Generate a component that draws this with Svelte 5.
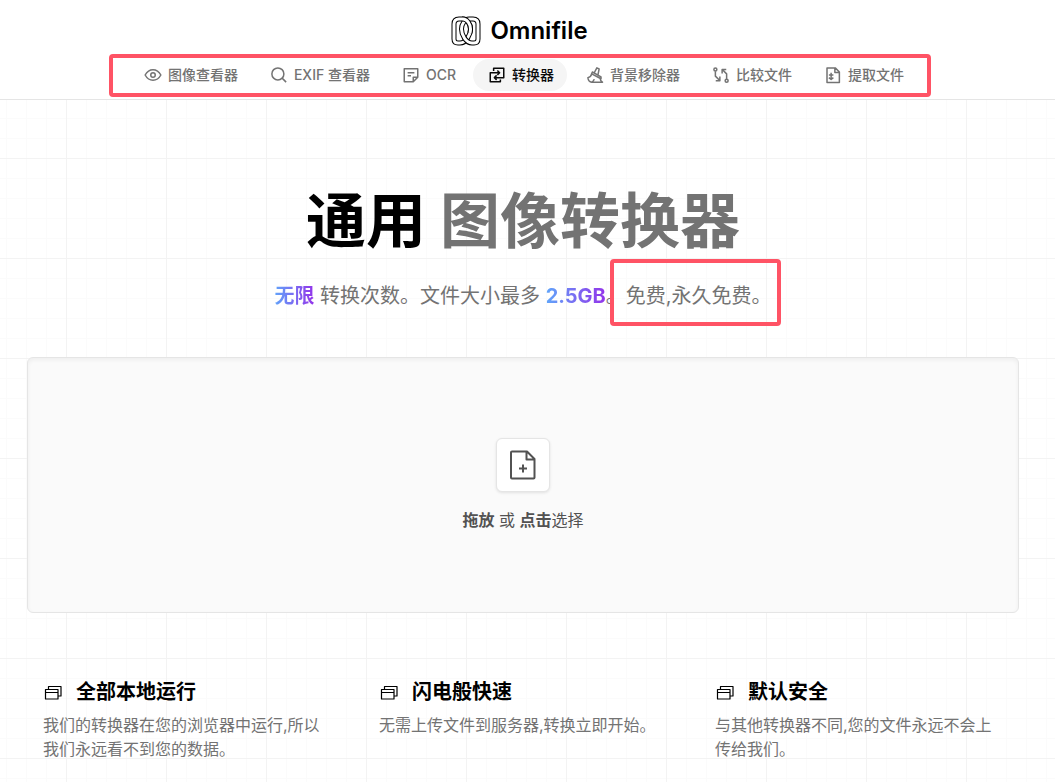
<script lang="ts">
	const nav = [
		{ slug: 'viewer', label: '图像查看器', icon: 'M1.500 12C4 7.500 7.500 5 12 5s8 2.500 10.500 7C20 16.500 16.500 19 12 19s-8-2.500-10.500-7Z M15 12a3 3 0 1 1-6 0a3 3 0 1 1 6 0Z' },
		{ slug: 'exif', label: 'EXIF 查看器', icon: 'M18.500 10.500a8 8 0 1 1-16 0a8 8 0 1 1 16 0Z M16.500 16.500l5 5' },
		{ slug: 'ocr', label: 'OCR', icon: 'M3 3.500h18V15l-6 6H3Z M21 15h-6v6 M7.500 9h9 M7.500 13h4.500' },
		{ slug: 'converter', label: '转换器', icon: 'M7.500 6.500V3H21V15.500H8.500 M11.500 12.500L8.500 15.500l3 3 M16.500 18v3H3V9H15.500 M12.500 6L15.500 9l-3 3' },
		{ slug: 'background', label: '背景移除器', icon: 'M11 9L14.500 2.500l3 1.500l-1.500 7.500 M8.500 8l11.500 6.500v2.500L7.500 10.500Z M7.500 10.500C7 13 5 15 2.500 15.500C3 19 5 21.500 7.500 21.500h14.500C20 20.500 19 19 19 17 M7.500 21.500c2-1 3-2 3.500-4' },
		{ slug: 'compare', label: '比较文件', icon: 'M6.500 4.500a2 2 0 1 1-4 0a2 2 0 1 1 4 0Z M4.500 7v6.500l5.500 5.500 M10.500 14v5.500H5 M21.500 19.500a2 2 0 1 1-4 0a2 2 0 1 1 4 0Z M19.500 17v-6.500L14 5 M13.500 10V4.500H19' },
		{ slug: 'extract', label: '提取文件', icon: 'M4 2.500h11l5.500 5.500v14H4Z M14.500 2.500V8.500h6 M9.500 9v9.500 M6.500 12h6 M6.500 15.500L9.500 18l3-2.500' },
	];

	const features = [
		{ title: '全部本地运行', text: '我们的转换器在您的浏览器中运行,所以我们永远看不到您的数据。' },
		{ title: '闪电般快速', text: '无需上传文件到服务器,转换立即开始。' },
		{ title: '默认安全', text: '与其他转换器不同,您的文件永远不会上传给我们。' },
	];

	// the two links of the logo chain; the last piece weaves the left one back on top
	const links = [
		'M8 3H12C16 3 19.500 8 19.500 13C19.500 19 15 27 9 27H7Q3 27 3 23V8Q3 3 8 3Z',
		'M22 3H18C14 3 10.500 8 10.500 13C10.500 19 15 27 21 27H23Q27 27 27 23V8Q27 3 22 3Z',
		'M11 3H12C16 3 19.500 8 19.500 13Q19.500 15 19 17',
	];

	let active = $state('converter');
	let picker: HTMLInputElement;
</script>

<svelte:head>
	<title>Omnifile</title>
</svelte:head>

<div class="page">
	<header>
		<a class="brand" href="/">
			<svg width="30" height="30" viewBox="0 0 30 30" fill="none" aria-hidden="true">
				{#each links as d}
					<path class="rim" {d} />
					<path class="core" {d} />
				{/each}
			</svg>
			<span>Omnifile</span>
		</a>
		<nav>
			{#each nav as item}
				<a href="#{item.slug}" class:active={active === item.slug} onclick={() => active = item.slug}>
					<svg width="18" height="18" viewBox="0 0 24 24" aria-hidden="true"><path d={item.icon} /></svg>
					<span>{item.label}</span>
				</a>
			{/each}
		</nav>
		<div class="mark mark-nav"></div>
	</header>

	<main>
		<h1>通用 <span>图像转换器</span></h1>
		<p class="subtitle">
			<b>无限</b> 转换次数。文件大小最多 <b>2.5GB</b>。<span class="free">免费,永久免费。<span class="mark mark-free"></span></span>
		</p>

		<button class="dropzone" onclick={() => picker.click()}>
			<span class="tile">
				<svg width="32" height="32" viewBox="0 0 32 32" aria-hidden="true">
					<path d="M5 2.500h15l7.500 7.500v18.500q0 1-1 1H5q-1 0-1-1v-25q0-1 1-1Z M19.500 2.500V10.500H27.500 M16 15.500v8 M12 19.500h8" />
				</svg>
			</span>
			<span class="hint"><b>拖放</b> 或 <b>点击</b>选择</span>
		</button>
		<input bind:this={picker} type="file" accept="image/*" aria-label="选择" hidden />

		<section class="features">
			{#each features as feature}
				<article>
					<h2>
						<svg width="20" height="20" viewBox="0 0 20 20" aria-hidden="true">
							<path d="M2.500 7.500h12.500v9.500h-12.500Z M2.500 10.500h12.500 M5.500 7.500V4.500h12.500v9.500h-3" />
						</svg>
						{feature.title}
					</h2>
					<p>{feature.text}</p>
				</article>
			{/each}
		</section>
	</main>
</div>

<style>
	:global(body) { margin: 0; background: #fff; }

	.page {
		--gutter: 9px;
		min-height: 100vh;
		font-family: Inter, "Noto Sans CJK SC", sans-serif;
		color: #000;
		background-color: #fff;
		background-image:
			linear-gradient(to right, #f3f3f3 1px, transparent 1px),
			linear-gradient(to bottom, #f3f3f3 1px, transparent 1px),
			linear-gradient(to right, #fbfbfb 1px, transparent 1px),
			linear-gradient(to bottom, #fbfbfb 1px, transparent 1px);
		background-size: 100px 100px, 100px 100px, 20px 20px, 20px 20px;
		background-position: 66px 58px;
	}

	header {
		position: relative;
		display: flex; flex-direction: column; align-items: center; gap: 10px;
		padding: 13px var(--gutter) 8px 0;
		background: #fff;
		border-bottom: 1px solid #e5e5e5;
	}
	.brand {
		display: flex; align-items: center; gap: 9px;
		height: 36px; padding-right: 7px;
		font-size: 24px; font-weight: 600; line-height: 36px;
		color: #000; text-decoration: none;
	}
	.rim { stroke: #000; stroke-width: 5; }
	.core { stroke: #fff; stroke-width: 3; }

	nav { display: flex; gap: 4px; }
	nav a {
		display: flex; align-items: center; gap: 6px;
		height: 32px; padding: 0 13px 0 15px; border-radius: 16px;
		font-size: 14px; font-weight: 500; line-height: 20px; white-space: nowrap;
		color: #737373; text-decoration: none;
	}
	nav a.active { background: #f5f5f5; color: #0a0a0a; }
	nav svg, .tile svg, h2 svg { flex: none; fill: none; stroke: currentColor; stroke-linejoin: round; }
	nav svg { stroke-width: 2; }

	.mark { position: absolute; box-sizing: border-box; border: 4px solid #ff5365; border-radius: 4px; pointer-events: none; }
	.mark-nav { left: 109px; right: 124px; top: 54px; bottom: 2px; }
	.mark-free { inset: -23px -9px -16px -16px; }

	main { padding: 89px calc(27px + var(--gutter)) 20px 27px; }
	h1 { margin: 0; font-size: 60px; font-weight: 700; line-height: 64px; text-align: center; }
	h1 span { color: #737373; }
	.subtitle {
		margin: 29px 0 47px;
		font-size: 20px; font-weight: 400; line-height: 28px; text-align: center;
		color: #737373;
	}
	.subtitle b {
		font-weight: 700; color: transparent;
		background: linear-gradient(to right, #60a5fa, #9333ea);
		background-clip: text;
	}
	.free { position: relative; display: inline-block; }

	.dropzone {
		box-sizing: border-box;
		display: flex; flex-direction: column; align-items: center; justify-content: center; gap: 16px;
		width: 100%; height: 256px; padding: 0;
		background: #fafafa; border: 1px solid #e5e5e5; border-radius: 6px;
		box-shadow: inset 0 2px 4px rgba(0,0,0,.05);
		font: inherit; color: #525252; cursor: pointer;
	}
	.tile {
		box-sizing: border-box;
		display: grid; place-items: center;
		width: 54px; height: 54px;
		background: #fff; border: 1px solid #e5e5e5; border-radius: 6px;
		box-shadow: 0 1px 3px rgba(0,0,0,.1);
	}
	.tile svg { stroke-width: 2; }
	.hint { font-size: 16px; font-weight: 400; line-height: 24px; }
	.hint b { font-weight: 700; }

	.features {
		display: grid; grid-template-columns: repeat(3, 1fr); gap: 48px;
		margin-top: 65px; padding: 0 16px;
	}
	h2 {
		display: flex; align-items: center; gap: 13px;
		margin: 0 0 7px;
		font-size: 20px; font-weight: 700; line-height: 28px;
	}
	h2 svg { stroke-width: 1.2; }
	article p { margin: 0; font-size: 16px; font-weight: 400; line-height: 24px; color: #737373; }

	@media (max-width: 768px) {
		nav { flex-wrap: wrap; justify-content: center; }
		.features { grid-template-columns: 1fr; }
	}
</style>
